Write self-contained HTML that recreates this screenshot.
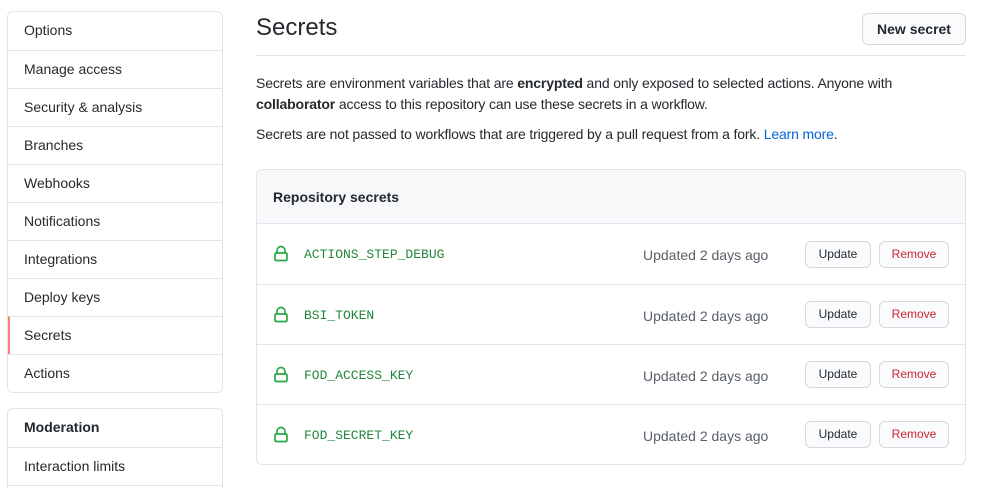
<!DOCTYPE html>
<html><head><meta charset="utf-8"><style>
*{box-sizing:border-box;margin:0;padding:0}
html,body{width:986px;height:488px;overflow:hidden}
body{background:#fff;font-family:"Liberation Sans",sans-serif;font-size:14px;color:#24292e;position:relative}
.side{position:absolute;left:7px;width:216px;border:1px solid #e1e4e8;border-radius:6px;overflow:hidden}
.side div{height:38px;line-height:37px;padding-left:16px;border-top:1px solid #e1e4e8}
.side div:first-child{border-top:none}
.side .act{border-left:2px solid #f9826c;padding-left:14px}
.side .hd{font-weight:bold}
.btn{position:absolute;border:1px solid #d5d8dc;border-radius:6px;background:#fafbfc;text-align:center;font-size:12px}
h1{position:absolute;left:256px;top:14px;font-size:24px;font-weight:normal}
.hr{position:absolute;left:256px;top:55px;width:710px;border-top:1px solid #e1e4e8}
p{position:absolute;left:256px;width:700px;line-height:21px;letter-spacing:-0.15px}
.box{position:absolute;left:256px;top:169px;width:710px;height:296px;border:1px solid #e1e4e8;border-radius:6px;overflow:hidden}
.bh{height:54px;background:#f6f8fa;border-bottom:1px solid #e1e4e8;padding:19px 0 0 16px;font-weight:bold}
.row{position:relative;height:60px;border-top:1px solid #e1e4e8}
.row:nth-child(2){border-top:none}
.nm{position:absolute;left:47px;top:23px;font-family:"Liberation Mono",monospace;font-size:13px;color:#22863a}
.up{position:absolute;left:386px;top:23px;color:#586069}
svg{position:absolute;left:16px;top:21px}
</style></head><body>
<div class="side" style="top:11px">
<div>Options</div><div>Manage access</div><div>Security &amp; analysis</div><div>Branches</div><div>Webhooks</div><div>Notifications</div><div>Integrations</div><div>Deploy keys</div><div class="act">Secrets</div><div>Actions</div>
</div>
<div class="side" style="top:408px;height:80px;border-bottom:none;border-radius:6px 6px 0 0">
<div class="hd">Moderation</div><div>Interaction limits</div>
</div>
<div style="position:absolute;left:8px;top:485px;width:214px;border-top:1px solid #e1e4e8"></div>
<h1>Secrets</h1>
<div class="btn" style="left:862px;top:13px;width:104px;height:32px;line-height:30px;font-size:14px;font-weight:bold">New secret</div>
<div class="hr"></div>
<p style="top:73px">Secrets are environment variables that are <b>encrypted</b> and only exposed to selected actions. Anyone with <b>collaborator</b> access to this repository can use these secrets in a workflow.</p>
<p style="top:124px">Secrets are not passed to workflows that are triggered by a pull request from a fork. <span style="color:#0366d6">Learn more</span>.</p>
<div class="box">
<div class="bh">Repository secrets</div>
<div class="row"><svg width="16" height="17" viewBox="0 0 16 17"><path d="M4 8V5.5a4 4 0 0 1 8 0V8" fill="none" stroke="#28a745" stroke-width="1.7"/><rect x="2" y="8" width="12" height="7.5" rx="1.3" fill="none" stroke="#28a745" stroke-width="1.7"/></svg><span class="nm">ACTIONS_STEP_DEBUG</span><span class="up">Updated 2 days ago</span></div>
<div class="row"><svg width="16" height="17" viewBox="0 0 16 17"><path d="M4 8V5.5a4 4 0 0 1 8 0V8" fill="none" stroke="#28a745" stroke-width="1.7"/><rect x="2" y="8" width="12" height="7.5" rx="1.3" fill="none" stroke="#28a745" stroke-width="1.7"/></svg><span class="nm">BSI_TOKEN</span><span class="up">Updated 2 days ago</span></div>
<div class="row"><svg width="16" height="17" viewBox="0 0 16 17"><path d="M4 8V5.5a4 4 0 0 1 8 0V8" fill="none" stroke="#28a745" stroke-width="1.7"/><rect x="2" y="8" width="12" height="7.5" rx="1.3" fill="none" stroke="#28a745" stroke-width="1.7"/></svg><span class="nm">FOD_ACCESS_KEY</span><span class="up">Updated 2 days ago</span></div>
<div class="row"><svg width="16" height="17" viewBox="0 0 16 17"><path d="M4 8V5.5a4 4 0 0 1 8 0V8" fill="none" stroke="#28a745" stroke-width="1.7"/><rect x="2" y="8" width="12" height="7.5" rx="1.3" fill="none" stroke="#28a745" stroke-width="1.7"/></svg><span class="nm">FOD_SECRET_KEY</span><span class="up">Updated 2 days ago</span></div>
</div>
<div class="btn" style="left:805px;top:241px;width:66px;height:27px;line-height:25px">Update</div>
<div class="btn" style="left:879px;top:241px;width:70px;height:27px;line-height:25px;color:#cb2431">Remove</div>
<div class="btn" style="left:805px;top:301px;width:66px;height:27px;line-height:25px">Update</div>
<div class="btn" style="left:879px;top:301px;width:70px;height:27px;line-height:25px;color:#cb2431">Remove</div>
<div class="btn" style="left:805px;top:361px;width:66px;height:27px;line-height:25px">Update</div>
<div class="btn" style="left:879px;top:361px;width:70px;height:27px;line-height:25px;color:#cb2431">Remove</div>
<div class="btn" style="left:805px;top:421px;width:66px;height:27px;line-height:25px">Update</div>
<div class="btn" style="left:879px;top:421px;width:70px;height:27px;line-height:25px;color:#cb2431">Remove</div>
</body></html>
